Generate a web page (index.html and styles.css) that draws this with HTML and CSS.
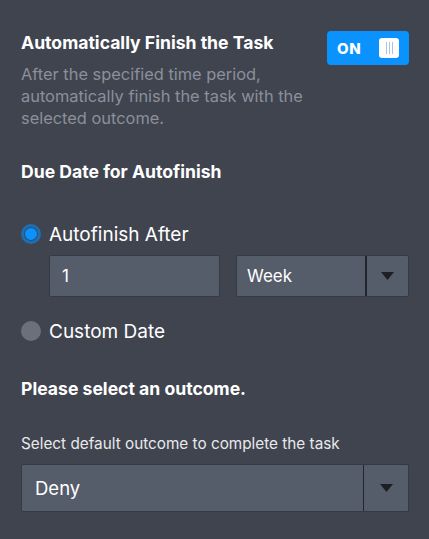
FILE: index.html
```html
<!DOCTYPE html>
<html>
<head>
<meta charset="utf-8">
<link rel="stylesheet" href="styles.css">
</head>
<body>
<div class="panel">
  <div class="head">
    <div class="head-text">
      <div class="title">Automatically Finish the Task</div>
      <div class="desc">After the specified time period, automatically finish the task with the selected outcome.</div>
    </div>
    <div class="toggle">
      <span class="toggle-label">ON</span>
      <span class="knob"><i></i><i></i><i></i></span>
    </div>
  </div>

  <div class="section-title due">Due Date for Autofinish</div>

  <div class="radio-row first">
    <span class="radio on"></span>
    <span class="radio-label">Autofinish After</span>
  </div>
  <div class="fields">
    <div class="input">1</div>
    <div class="select small">
      <span class="select-value">Week</span>
      <span class="select-arrow"><svg width="13" height="8" viewBox="0 0 13 8"><path d="M0 0H13L6.5 8Z" fill="#1c1f26"/></svg></span>
    </div>
  </div>
  <div class="radio-row second">
    <span class="radio off"></span>
    <span class="radio-label">Custom Date</span>
  </div>

  <div class="section-title outcome">Please select an outcome.</div>
  <div class="sublabel">Select default outcome to complete the task</div>
  <div class="select big">
    <span class="select-value">Deny</span>
    <span class="select-arrow"><svg width="13" height="8" viewBox="0 0 13 8"><path d="M0 0H13L6.5 8Z" fill="#1c1f26"/></svg></span>
  </div>
</div>
</body>
</html>
```
FILE: styles.css
```css
html, body {
  margin: 0;
  padding: 0;
  background: #40444f;
}
body {
  font-family: Inter, "Liberation Sans", sans-serif;
  color: #ffffff;
}
.panel {
  padding: 31px 20px 0 21px;
  width: 429px;
  box-sizing: border-box;
}
.head {
  display: flex;
  justify-content: space-between;
  align-items: flex-start;
}
.title {
  font-size: 17.6px;
  font-weight: 700;
  line-height: 24px;
}
.desc {
  margin-top: 8px;
  font-size: 16.4px;
  line-height: 22px;
  color: #8b909b;
  width: 300px;
}
.toggle {
  width: 82px;
  height: 34px;
  background: #0a93ff;
  border-radius: 4px;
  display: flex;
  align-items: center;
  justify-content: space-between;
  padding: 0 10px 0 10px;
  box-sizing: border-box;
}
.toggle-label {
  font-weight: 800;
  font-size: 15px;
  letter-spacing: 0.6px;
}
.knob {
  width: 20px;
  height: 20px;
  background: #ffffff;
  border-radius: 3px;
  display: flex;
  justify-content: center;
  align-items: center;
  gap: 2px;
}
.knob i {
  width: 1px;
  height: 12px;
  background: #a9c4de;
}
.section-title {
  font-size: 17.6px;
  font-weight: 700;
  line-height: 24px;
}
.due {
  margin-top: 31px;
}
.radio-row {
  display: flex;
  align-items: center;
  height: 26px;
}
.radio-row.first {
  margin-top: 37px;
}
.radio-row.second {
  margin-top: 21px;
}
.radio {
  width: 20px;
  height: 20px;
  border-radius: 50%;
  box-sizing: border-box;
  margin-right: 8px;
}
.radio.on {
  background: #0a93ff;
  border: 3px solid #1a6fb5;
  box-shadow: inset 0 0 0 1px #40444f;
  background-clip: padding-box;
}
.radio.off {
  background: #6b707b;
}
.radio-label {
  font-size: 19px;
}
.fields {
  display: flex;
  margin-top: 8px;
  margin-left: 28px;
  gap: 16px;
}
.input {
  width: 171px;
  height: 42px;
  box-sizing: border-box;
  background: #555d6b;
  border: 1px solid #353a44;
  border-radius: 2px;
  padding: 0 12px;
  font-size: 17px;
  line-height: 40px;
}
.select {
  display: flex;
  background: #555d6b;
  border: 1px solid #353a44;
  border-radius: 2px;
  box-sizing: border-box;
}
.select.small {
  width: 173px;
  height: 42px;
}
.select-value {
  flex: 1;
  border-right: 2px solid #22262d;
  padding-left: 10px;
  font-size: 17px;
  display: flex;
  align-items: center;
}
.select.small .select-arrow {
  width: 41px;
}
.select-arrow {
  display: flex;
  align-items: center;
  justify-content: center;
}
.outcome {
  margin-top: 33px;
}
.sublabel {
  margin-top: 33px;
  font-size: 15.3px;
  line-height: 20px;
  color: #e8e9eb;
}
.select.big {
  margin-top: 10px;
  width: 388px;
  height: 48px;
}
.select.big .select-value {
  padding-left: 13px;
  font-size: 18.5px;
  border-right: 1px solid #22262d;
}
.select.big .select-arrow {
  width: 44px;
}
```
